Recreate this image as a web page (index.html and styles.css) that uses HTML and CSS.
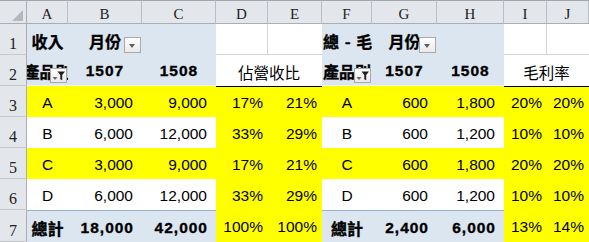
FILE: index.html
```html
<!DOCTYPE html>
<html lang="zh-Hant">
<head>
<meta charset="utf-8">
<title>Pivot</title>
<link rel="stylesheet" href="styles.css">
</head>
<body>
<div class="sheet">
  <div class="corner"><span class="tri"></span></div>
  <div class="ch">A</div><div class="ch">B</div><div class="ch">C</div><div class="ch">D</div><div class="ch">E</div>
  <div class="ch">F</div><div class="ch">G</div><div class="ch">H</div><div class="ch">I</div><div class="ch">J</div>

  <div class="rh">1</div>
  <div class="c blue ctr b cjk">收入</div>
  <div class="c blue ctr b cjk">月份<span class="dd"></span></div>
  <div class="c blue"></div>
  <div class="c wht gr gb"></div>
  <div class="c wht gb"></div>
  <div class="c blue lft b cjk">總 - 毛</div>
  <div class="c blue ctr b cjk">月份<span class="dd"></span></div>
  <div class="c blue"></div>
  <div class="c wht gr gb"></div>
  <div class="c wht gb"></div>

  <div class="rh">2</div>
  <div class="c blue ctr b cjk hb"><span class="fix">產品別</span><span class="fb"><svg width="15" height="13" viewBox="0 0 15 13"><path d="M1.5 8h5l-2.5 3z" fill="#6a6a6a"/><path d="M6.5 2.5h7.5l-2.8 3.6v5.2l-1.9-1.1v-4.1z" fill="#1e1e1e"/></svg></span></div>
  <div class="c blue ctr b bn hb">1507</div>
  <div class="c blue ctr b bn hb">1508</div>
  <div class="c wht ctr cjk reg span2">佔營收比</div>
  <div class="c blue ctr b cjk hb"><span class="fix">產品別</span><span class="fb"><svg width="15" height="13" viewBox="0 0 15 13"><path d="M1.5 8h5l-2.5 3z" fill="#6a6a6a"/><path d="M6.5 2.5h7.5l-2.8 3.6v5.2l-1.9-1.1v-4.1z" fill="#1e1e1e"/></svg></span></div>
  <div class="c blue ctr b bn hb">1507</div>
  <div class="c blue ctr b bn hb">1508</div>
  <div class="c wht ctr cjk reg span2">毛利率</div>

  <div class="rh">3</div>
  <div class="c yel ctr">A</div>
  <div class="c yel num">3,000</div>
  <div class="c yel num">9,000</div>
  <div class="c yel pct tk">17%</div>
  <div class="c yel pct tk">21%</div>
  <div class="c yel ctr">A</div>
  <div class="c yel num">600</div>
  <div class="c yel num">1,800</div>
  <div class="c yel pct tk">20%</div>
  <div class="c yel pct tk">20%</div>

  <div class="rh">4</div>
  <div class="c wht ctr">B</div>
  <div class="c wht num">6,000</div>
  <div class="c wht num">12,000</div>
  <div class="c yel pct">33%</div>
  <div class="c yel pct">29%</div>
  <div class="c wht ctr">B</div>
  <div class="c wht num">600</div>
  <div class="c wht num">1,200</div>
  <div class="c yel pct">10%</div>
  <div class="c yel pct">10%</div>

  <div class="rh">5</div>
  <div class="c yel ctr">C</div>
  <div class="c yel num">3,000</div>
  <div class="c yel num">9,000</div>
  <div class="c yel pct">17%</div>
  <div class="c yel pct">21%</div>
  <div class="c yel ctr">C</div>
  <div class="c yel num">600</div>
  <div class="c yel num">1,800</div>
  <div class="c yel pct">20%</div>
  <div class="c yel pct">20%</div>

  <div class="rh">6</div>
  <div class="c wht ctr">D</div>
  <div class="c wht num">6,000</div>
  <div class="c wht num">12,000</div>
  <div class="c yel pct">33%</div>
  <div class="c yel pct">29%</div>
  <div class="c wht ctr">D</div>
  <div class="c wht num">600</div>
  <div class="c wht num">1,200</div>
  <div class="c yel pct">10%</div>
  <div class="c yel pct">10%</div>

  <div class="rh">7</div>
  <div class="c blue ctr b cjk tl">總計</div>
  <div class="c blue num b bn tl">18,000</div>
  <div class="c blue num b bn tl">42,000</div>
  <div class="c yel pct">100%</div>
  <div class="c yel pct">100%</div>
  <div class="c blue ctr b cjk tl">總計</div>
  <div class="c blue num b bn tl">2,400</div>
  <div class="c blue num b bn tl">6,000</div>
  <div class="c yel pct">13%</div>
  <div class="c yel pct">14%</div>
</div>
</body>
</html>
```

FILE: styles.css
```css
* { box-sizing: border-box; margin: 0; padding: 0; }
html, body { width: 589px; height: 242px; overflow: hidden; background: #fff; }

.sheet {
  display: grid;
  grid-template-columns: 27px 41px 74px 74px 52px 54px 50px 65px 67px 43px 42px;
  grid-template-rows: 24px repeat(6, 31px) 32px;
  font-family: "Liberation Sans", Arial, sans-serif;
  font-size: 15.5px;
  color: #000;
}

.corner {
  position: relative;
  background: #e3e6ea;
  border-top: 1px solid #a3a6aa;
  border-right: 1px solid #a9aeb4;
  border-bottom: 1px solid #a9aeb4;
}
.tri {
  position: absolute;
  right: 3px;
  bottom: 2px;
  width: 0;
  height: 0;
  border-left: 11px solid transparent;
  border-bottom: 11px solid #b4b7bb;
}

.ch {
  display: flex;
  justify-content: center;
  align-items: center;
  padding-top: 4px;
  background: #e3e6ea;
  border-top: 1px solid #a3a6aa;
  border-right: 1px solid #b9bec4;
  border-bottom: 1px solid #a9aeb4;
  font-family: "Liberation Serif", "Times New Roman", serif;
  font-size: 15px;
  color: #222;
}

.rh {
  display: flex;
  justify-content: center;
  align-items: flex-end;
  padding-bottom: 2px;
  line-height: 1;
  background: #e3e6ea;
  border-right: 1px solid #a9aeb4;
  border-bottom: 1px solid #c6cacf;
  font-family: "Liberation Serif", "Times New Roman", serif;
  font-size: 16px;
  color: #222;
}

.c {
  position: relative;
  display: flex;
  align-items: center;
  padding-top: 2px;
  white-space: nowrap;
  overflow: hidden;
}
.blue { background: #dce6f1; }
.yel { background: #ffff00; }
.wht { background: #fff; }

.ctr { justify-content: center; }
.lft { justify-content: flex-start; padding-left: 1px; word-spacing: 2px; }
.num { justify-content: flex-end; padding-right: 9px; }
.num.bn { padding-right: 8px; }
.pct { justify-content: flex-end; padding-right: 5px; }

.b { font-weight: bold; -webkit-text-stroke: 0.35px #000; }
.bn { letter-spacing: 1px; }
.cjk { font-family: "Noto Sans CJK TC", "Noto Sans CJK SC", sans-serif; font-size: 16px; }
.cjk.reg { font-weight: normal; font-size: 15.5px; }
.fix { flex-shrink: 0; }
.span2 { grid-column: span 2; }

.hb { border-bottom: 1px solid #eef2f7; }
.gr { border-right: 1px solid #d4d4d4; }
.gb { border-bottom: 1px solid #d4d4d4; }
.tk { border-top: 1px solid #000; }
.tl { border-top: 1px solid #95b3d7; }

.dd, .fb {
  position: absolute;
  right: 1px;
  width: 17px;
  border: 1px solid #a9a9a9;
  background: linear-gradient(#fefefe, #e9e9e9);
  -webkit-text-stroke: 0;
}
.dd { bottom: 2px; height: 16px; }
.dd::after {
  content: "";
  position: absolute;
  left: 4px;
  top: 6px;
  border-left: 3.5px solid transparent;
  border-right: 3.5px solid transparent;
  border-top: 4px solid #5f5f5f;
}
.fb { bottom: 2px; height: 15px; }
.fb svg { display: block; }
```
